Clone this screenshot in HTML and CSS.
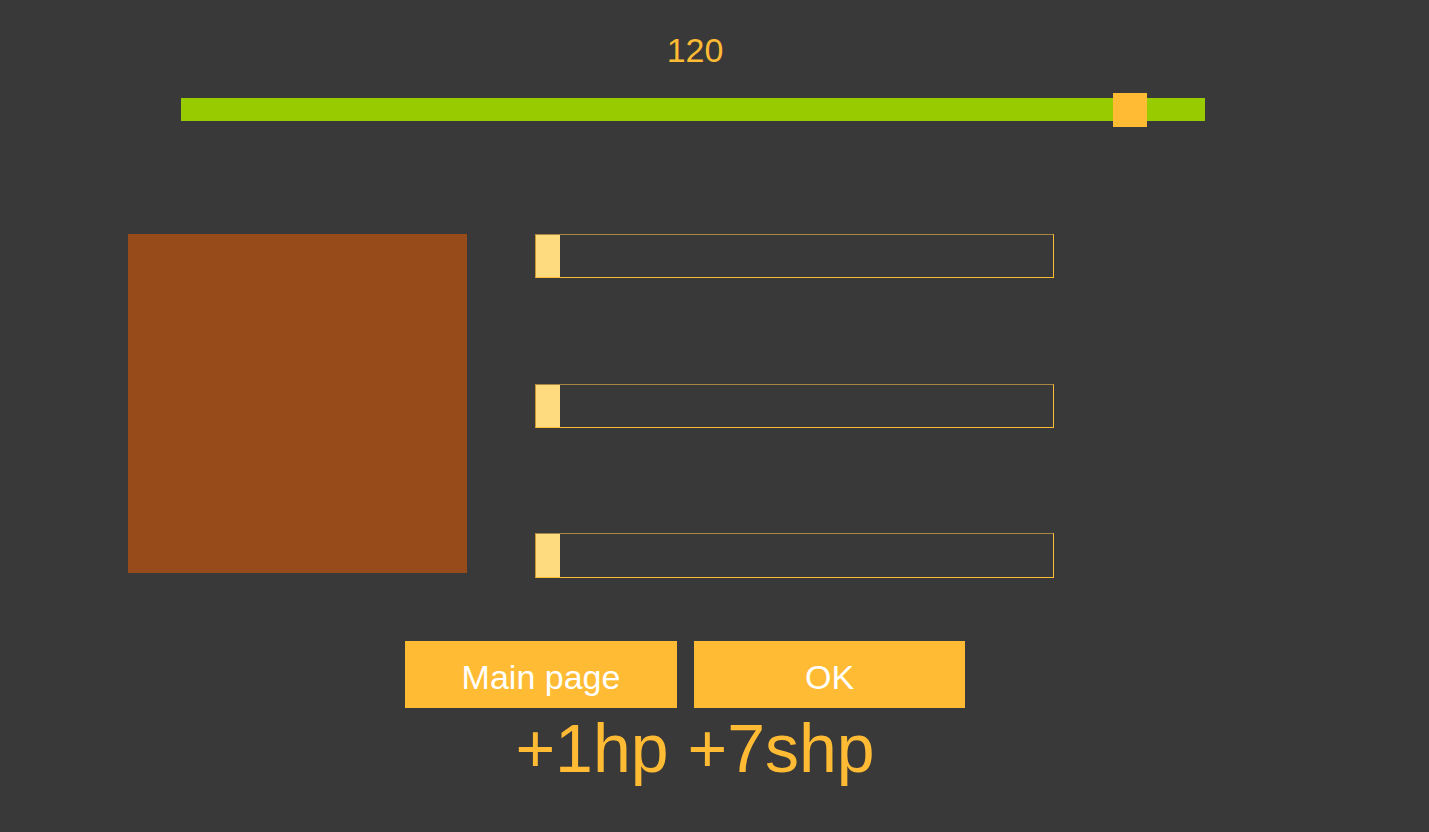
FILE: index.html
```html
<!DOCTYPE html>
<html>
<head>
<meta charset="utf-8">
<link rel="stylesheet" href="styles.css">
</head>
<body>
<div class="page">
  <div class="value">120</div>
  <div class="track-wrap">
    <div class="track">
      <div class="track-thumb" style="left: 932px"></div>
    </div>
  </div>
  <div class="main">
    <div class="swatch"></div>
    <div class="sliders">
      <div class="slider"><div class="thumb"></div></div>
      <div class="slider"><div class="thumb"></div></div>
      <div class="slider slider-last"><div class="thumb"></div></div>
    </div>
  </div>
  <div class="buttons">
    <div class="btn">Main page</div>
    <div class="btn">OK</div>
  </div>
  <div class="reward">+1hp +7shp</div>
</div>
</body>
</html>
```

FILE: styles.css
```css
html, body {
  margin: 0;
  padding: 0;
}
body {
  background: #393939;
  font-family: "Liberation Sans", Arial, sans-serif;
  width: 1429px;
  height: 832px;
  overflow: hidden;
}
.page {
  display: flex;
  flex-direction: column;
}
.value {
  margin-top: 30px;
  height: 40px;
  line-height: 40px;
  font-size: 34px;
  color: #ffbb33;
  text-align: center;
  width: 1390px;
}
.track-wrap {
  margin-top: 28px;
  padding-left: 181px;
}
.track {
  position: relative;
  width: 1024px;
  height: 23px;
  background: #99cc00;
}
.track-thumb {
  position: absolute;
  top: -5px;
  width: 34px;
  height: 34px;
  background: #ffbb33;
}
.main {
  margin-top: 113px;
  display: flex;
  padding-left: 128px;
  gap: 68px;
}
.swatch {
  width: 339px;
  height: 339px;
  background: #984b1a;
}
.sliders {
  display: flex;
  flex-direction: column;
  gap: 106px;
}
.slider {
  width: 517px;
  height: 42px;
  border: 1px solid #ffbb33;
  border-top-color: #a88744;
  border-left-color: #c9962f;
  display: flex;
}
.slider-last {
  margin-top: -1px;
  height: 43px;
}
.thumb {
  width: 24px;
  background: #ffdb80;
}
.buttons {
  margin-top: 63px;
  display: flex;
  gap: 17px;
  padding-left: 405px;
}
.btn {
  width: 272px;
  height: 67px;
  background: #ffbb33;
  color: #ffffff;
  font-size: 34px;
  line-height: 72px;
  text-align: center;
}
.btn + .btn {
  width: 271px;
}
.reward {
  width: 1390px;
  text-align: center;
  font-size: 68px;
  line-height: 80px;
  color: #ffbb33;
}
```
